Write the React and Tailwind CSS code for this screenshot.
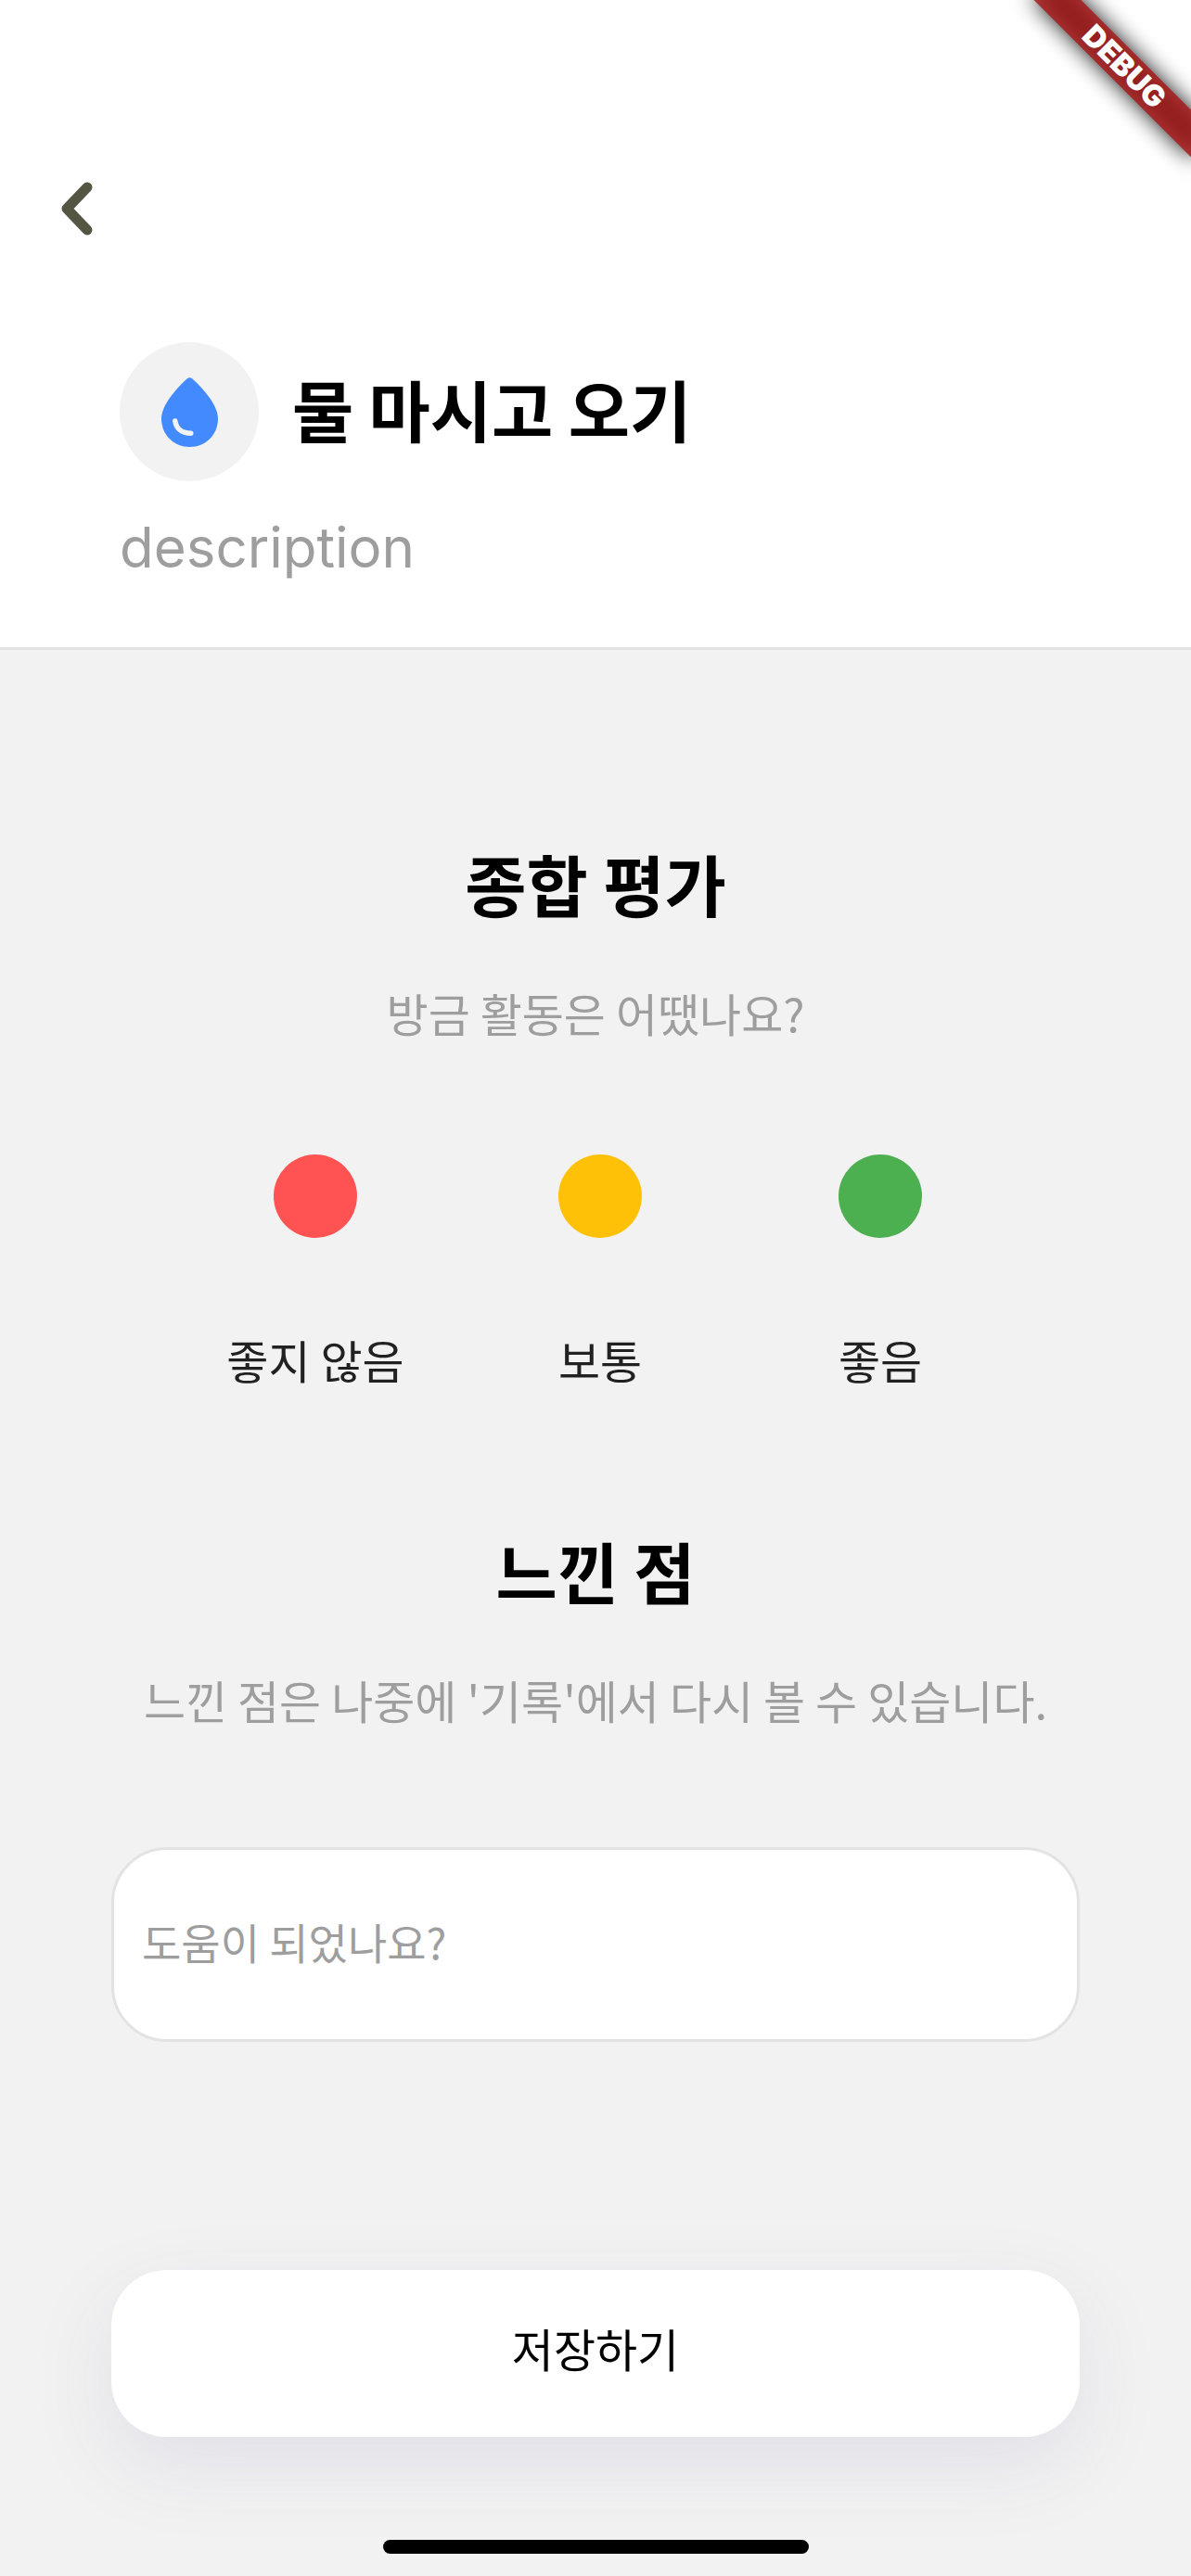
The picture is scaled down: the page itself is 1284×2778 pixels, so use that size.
import React from "react";

const ratings = [
  { value: "bad", label: "좋지 않음", color: "bg-[#ff5252]" },
  { value: "normal", label: "보통", color: "bg-[#ffc107]" },
  { value: "good", label: "좋음", color: "bg-[#4caf50]" },
];

function DebugBanner() {
  return (
    <div className="pointer-events-none absolute top-0 right-0 h-[240px] w-[240px] overflow-hidden">
      <div className="absolute top-[54px] right-[-48px] h-9 w-60 rotate-45">
        <div className="absolute inset-0 bg-black/90 blur-[12px]" />
        <div className="absolute inset-0 flex items-center justify-center bg-[#a71c1c]/85 font-['Inter',sans-serif] text-[32px] leading-9 font-black text-white">
          DEBUG
        </div>
      </div>
    </div>
  );
}

function BackIcon() {
  return (
    <svg viewBox="0 0 34 58" className="h-[58px] w-[34px]" fill="none" aria-hidden="true">
      <path d="M28 6 L6 29 L28 52" stroke="#555544" strokeWidth="11" strokeLinecap="round" strokeLinejoin="round" />
    </svg>
  );
}

function WaterDrop() {
  return (
    <svg viewBox="0 0 61 75" className="h-[75px] w-[61px]" fill="none" aria-hidden="true">
      <path
        d="M27.6 1.4 Q30.5 -1 33.4 1.4 C46 13 61 30 61 44.5 C61 62 47.5 75 30.5 75 C13.5 75 0 62 0 44.5 C0 30 15 13 27.6 1.4 Z"
        fill="#448aff"
      />
      <path d="M14.8 47 C16 55.5 22.5 60.3 31.8 60.3" stroke="#f2f2f2" strokeWidth="5.4" strokeLinecap="round" />
    </svg>
  );
}

function SectionHeading({ title, text }) {
  return (
    <div className="flex flex-col items-center gap-[65px] text-center">
      <h2 className="text-[72px] leading-[90px] font-bold text-black">{title}</h2>
      <p className="text-[49px] leading-[60px] text-[#9e9e9e]">{text}</p>
    </div>
  );
}

export default function App() {
  return (
    <div className="relative flex min-h-screen flex-col overflow-hidden bg-[#f2f2f2] font-['Noto_Sans_CJK_KR',sans-serif]">
      <header className="border-b-[3px] border-[#e3e3e3] bg-white pt-[196px] pb-[70px]">
        <button type="button" aria-label="뒤로" className="ml-[66px] block">
          <BackIcon />
        </button>
        <div className="mt-[115px] flex items-center gap-9 px-[129px]">
          <div className="flex size-[150px] shrink-0 items-center justify-center rounded-full bg-[#f2f2f2]">
            <WaterDrop />
          </div>
          <h1 className="pb-2 text-[72px] leading-[90px] font-bold text-black">물 마시고 오기</h1>
        </div>
        <p className="mt-[34px] px-[129px] font-['Inter',sans-serif] text-[60px] leading-[75px] text-[#9e9e9e]">description</p>
      </header>

      <main className="flex flex-1 flex-col pt-[206px]">
        <SectionHeading title="종합 평가" text="방금 활동은 어땠나요?" />

        <div role="radiogroup" aria-label="종합 평가" className="mx-[185px] mt-[123px] grid grid-cols-[310fr_304fr_300fr]">
          {ratings.map(({ value, label, color }) => (
            <label key={value} className="flex flex-col items-center gap-[101px] text-[49px] leading-[60px] text-[#212121]">
              <input type="radio" name="rating" value={value} className={`size-[90px] appearance-none rounded-full ${color}`} />
              {label}
            </label>
          ))}
        </div>

        <div className="mt-[152px]">
          <SectionHeading title="느낀 점" text="느낀 점은 나중에 '기록'에서 다시 볼 수 있습니다." />
        </div>

        <div className="mt-[129px] px-[120px]">
          <input
            type="text"
            aria-label="느낀 점"
            placeholder="도움이 되었나요?"
            className="block h-[210px] w-full rounded-[60px] border-[3px] border-[#e3e3e3] bg-white px-[30px] pb-2 text-[46px] text-black outline-none placeholder:text-[#9e9e9e]"
          />
        </div>

        <div className="mt-auto px-[120px] pb-[111px]">
          <button
            type="button"
            className="block h-[180px] w-full rounded-[60px] bg-white pb-3 text-[49px] text-black shadow-[0_30px_90px_rgba(81,70,148,0.1)]"
          >
            저장하기
          </button>
        </div>
      </main>

      <div className="mx-auto mb-6 h-[15px] w-[459px] rounded-full bg-black" />
      <DebugBanner />
    </div>
  );
}
